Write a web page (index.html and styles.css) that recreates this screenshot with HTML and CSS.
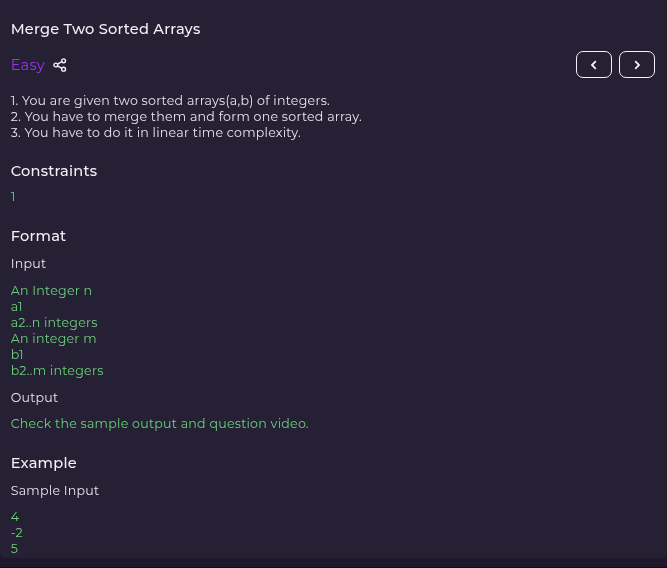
FILE: index.html
```html
<!DOCTYPE html>
<html lang="en">
<head>
<meta charset="utf-8">
<title>Merge Two Sorted Arrays</title>
<link rel="stylesheet" href="styles.css">
</head>
<body>
<div class="panel">
<main class="problem">
  <h1 class="heading">Merge Two Sorted Arrays</h1>
  <div class="toolbar">
    <div class="meta">
      <span class="difficulty">Easy</span>
      <svg class="share" viewBox="0 0 14 14" fill="none" stroke="currentColor" stroke-width="1.4"><circle cx="2.8" cy="7" r="1.9"/><circle cx="10.6" cy="2.8" r="1.9"/><circle cx="10.6" cy="11.2" r="1.9"/><path d="M4.5 6.1 8.9 3.7M4.5 7.9l4.4 2.4"/></svg>
    </div>
    <nav class="pager">
      <button class="nav-btn" aria-label="Previous"><svg viewBox="0 0 10 10"><path d="M6.8 1.2 3 5l3.8 3.8"/></svg></button>
      <button class="nav-btn" aria-label="Next"><svg viewBox="0 0 10 10"><path d="M3.2 1.2 7 5 3.2 8.8"/></svg></button>
    </nav>
  </div>
  <div class="text statement">
    <div>1. You are given two sorted arrays(a,b) of integers.</div>
    <div>2. You have to merge them and form one sorted array.</div>
    <div>3. You have to do it in linear time complexity.</div>
  </div>
  <h2 class="heading constraints">Constraints</h2>
  <div class="text code one">1</div>
  <h2 class="heading format">Format</h2>
  <h3 class="text label">Input</h3>
  <div class="text code input">
    <div>An Integer n</div>
    <div>a1</div>
    <div>a2..n integers</div>
    <div>An integer m</div>
    <div>b1</div>
    <div>b2..m integers</div>
  </div>
  <h3 class="text label">Output</h3>
  <div class="text code output">Check the sample output and question video.</div>
  <h2 class="heading example">Example</h2>
  <h3 class="text label">Sample Input</h3>
  <div class="text code sample">
    <div>4</div>
    <div>-2</div>
    <div>5</div>
  </div>
</main>
</div>
</body>
</html>
```

FILE: styles.css
```css
* { box-sizing: border-box; }
body {
  margin: 0;
  height: 568px;
  overflow: hidden;
  background: #20172a;
  border-bottom: 1px solid #120d18;
  color: #f4f2f8;
  font-family: Montserrat, "Open Sans", "Liberation Sans", sans-serif;
}
.panel { height: 558px; background: #252033; border-radius: 0 0 6px 6px; }
.problem { height: 558px; padding: 19px 12px 0 10.7px; will-change: transform; }
.heading { margin: 0; font-size: 14.6px; line-height: 20px; font-weight: 530; letter-spacing: 0.22px; }
.toolbar { display: flex; justify-content: space-between; align-items: center; height: 27px; margin-top: 12px; }
.meta { display: flex; align-items: center; gap: 8px; }
.difficulty { color: #9a30f0; font-size: 14.6px; letter-spacing: 0.26px; }
.share { width: 14px; height: 14px; }
.pager { display: flex; gap: 7px; }
.nav-btn { display: grid; place-items: center; width: 36px; height: 27px; padding: 0; border: 1px solid #f4f2f8; border-radius: 7px; background: none; }
.nav-btn svg { width: 10px; height: 10px; fill: none; stroke: #f4f2f8; stroke-width: 1.8; }
.text { margin: 0; font-size: 12.6px; line-height: 16px; font-weight: 400; letter-spacing: 0.245px; }
.statement { margin-top: 15px; color: #e8e5ee; }
.constraints { margin-top: 20px; }
.one { margin-top: 8px; }
.format { margin-top: 21px; }
.label { margin-top: 10px; color: #e8e5ee; }
.code { color: #6cd07c; }
.input { margin-top: 11px; }
.label + .output, .label + .sample { margin-top: 10px; }
.input + .label { margin-top: 11px; }
.example { margin-top: 21px; }
```
